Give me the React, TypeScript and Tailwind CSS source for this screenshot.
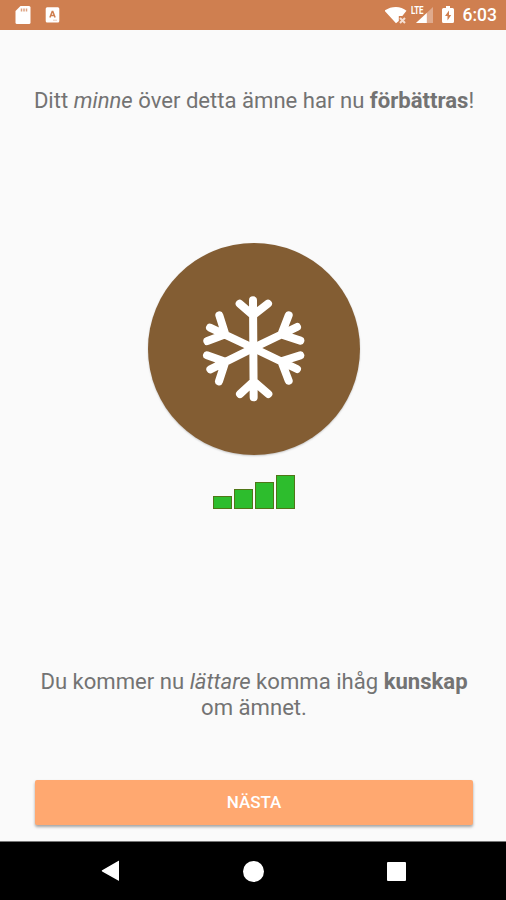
import React from 'react';

const bars = ['h-[13px]', 'h-5', 'h-[27px]', 'h-[34px]'];

const StatusBar: React.FC = () => (
  <header className="flex h-[30px] shrink-0 items-center justify-between bg-[#cf7f50] pl-[14px] pr-[9px] text-white">
    <div className="flex items-center gap-[14px]">
      {/* SD card */}
      <svg className="h-5 w-[17px]" viewBox="0 0 17 20">
        <path d="M6.5 1H15a1.5 1.5 0 0 1 1.5 1.5v15A1.5 1.5 0 0 1 15 19H3a1.5 1.5 0 0 1-1.5-1.5V6z" fill="#fff" />
        <path d="M7.5 3.5v3M10 3.5v3M12.5 3.5v3" stroke="#dda17f" strokeWidth="1.5" />
      </svg>
      {/* Keyboard layout */}
      <svg className="h-4 w-[15px]" viewBox="0 0 15 16">
        <rect x="0.7" y="0.3" width="13.6" height="15.2" rx="1.5" fill="#fff" />
        <path d="M4.9 10.5L7.2 4.4h.6l2.3 6.1M5.8 8.6h3.5" fill="none" stroke="#cf7f50" strokeWidth="1.5" />
        <path d="M8 13.2h4" stroke="#e7bda6" strokeWidth="0.8" />
      </svg>
    </div>
    <div className="flex items-center">
      {/* Wifi without connection */}
      <svg className="h-[30px] w-[24px]" viewBox="0 0 24 30">
        <path d="M-.5 10.7C6 5.6 16 5.6 21.5 10.7L17.3 16H13.8v5L11 23.2z" fill="#fff" />
        <path d="M15 18l5 5M20 18l-5 5" stroke="#f5dfd3" strokeWidth="2" />
      </svg>
      {/* Mobile signal */}
      <div className="relative ml-[2px] h-[30px] w-[25px]">
        <svg className="h-[30px] w-[25px]" viewBox="0 0 25 30">
          <path d="M22 7v16H5z" fill="#dfaa8d" />
          <path d="M15.8 13V23H5z" fill="#fff" />
        </svg>
        <span className="absolute left-0 top-[5px] origin-left scale-x-[0.72] text-[11px] font-bold leading-[11px] tracking-[-0.2px]">LTE</span>
      </div>
      {/* Charging battery */}
      <svg className="ml-[5px] mr-px h-[30px] w-[14px]" viewBox="0 0 14 30">
        <path d="M5 6h4v2h2.5Q13 8 13 9.5v12Q13 23 11.5 23h-9Q1 23 1 21.5v-12Q1 8 2.5 8H5z" fill="#fff" />
        <path d="M8 10.5L4 16h2.5v4.5L10.2 15H8z" fill="#cf7f50" />
      </svg>
      <span className="ml-[7px] text-[17.5px] font-medium leading-[31px]">6:03</span>
    </div>
  </header>
);

const Snowflake: React.FC = () => (
  <svg className="h-[212px] w-[212px]" viewBox="0 0 636 636">
    <g transform="translate(126 126)" fill="none" stroke="#fff" strokeWidth="24" strokeLinecap="round" strokeLinejoin="round">
      <path d="M189 46L191 337M149 56L189 91L234 56M150 327L191 289L235 327" />
      <path d="M60 128L190 189L321 252M88 91L106 148L52 168M331 211L274 229L296 287" />
      <path d="M321 126L190 189L61 253M296 91L274 148L331 167M51 211L106 230L87 289" />
    </g>
  </svg>
);

const NavigationBar: React.FC = () => (
  <nav className="flex h-[59px] shrink-0 items-center justify-between border-t border-[#777] bg-black pl-[101px] pr-[100px]">
    <button aria-label="Back">
      <svg className="h-[22px] w-[18px]" viewBox="0 0 18 22">
        <path d="M18 1.5v18.5L1.5 10.8z" fill="#fff" stroke="#fff" strokeWidth="1.5" strokeLinejoin="round" />
      </svg>
    </button>
    <button aria-label="Home" className="size-[21px] rounded-full bg-white" />
    <button aria-label="Recents" className="size-[19px] rounded-[1px] bg-white" />
  </nav>
);

const App: React.FC = () => {
  return (
    <div className="flex h-[900px] w-[506px] flex-col overflow-hidden bg-[#fafafa] font-['Roboto',sans-serif]">
      <StatusBar />

      <main className="flex flex-1 flex-col items-center pl-[35px] pr-[33px] pt-[57px] text-[#737373]">
        <p className="whitespace-nowrap text-center text-[22.1px] leading-[26px]">
          Ditt <em>minne</em> över detta ämne har nu <strong className="font-bold">förbättras</strong>!
        </p>

        <div className="mt-[130px] size-[212px] rounded-full bg-[#835d33] shadow-[0_1px_2px_rgba(0,0,0,0.2)]">
          <Snowflake />
        </div>

        {/* Memory strength */}
        <div className="mt-5 flex h-[34px] items-end gap-[2px]">
          {bars.map((height) => (
            <div key={height} className={`w-[19px] border border-[#4f7616] bg-[#2dbd2d] ${height}`} />
          ))}
        </div>

        <p className="mt-[159px] whitespace-nowrap text-center text-[22.1px] leading-[26px]">
          Du kommer nu <em>lättare</em> komma ihåg <strong className="font-bold">kunskap</strong>
          <br />
          om ämnet.
        </p>

        <button className="mt-[60px] h-[45px] w-full rounded-[2px] bg-[#ffa870] pt-px text-[17px] font-medium text-white shadow-[0_2px_3px_rgba(0,0,0,0.35)]">
          NÄSTA
        </button>
      </main>

      <NavigationBar />
    </div>
  );
};

export default App;
